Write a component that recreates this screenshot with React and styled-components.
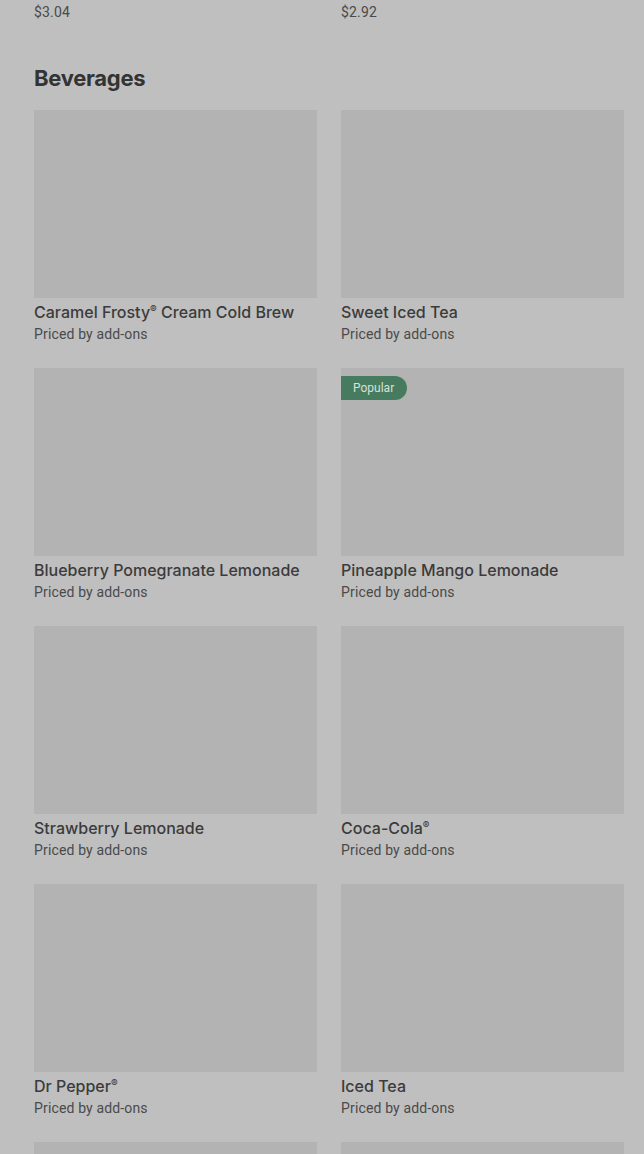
import React from "react";
import styled, { createGlobalStyle } from "styled-components";

const GlobalStyle = createGlobalStyle`
  html, body {
    margin: 0;
    padding: 0;
    background: #bfbfbf;
  }
  body {
    font-family: Roboto, "Liberation Sans", sans-serif;
    -webkit-font-smoothing: antialiased;
  }
`;

const Viewport = styled.div`
  height: 1154px;
  overflow: hidden;
`;

const Page = styled.div`
  margin-top: -24px;
  padding: 0 20px 0 34px;
`;

const Grid = styled.div`
  display: grid;
  grid-template-columns: 1fr 1fr;
  column-gap: 24px;
  row-gap: 24px;
`;

const Card = styled.div`
  display: flex;
  flex-direction: column;
  min-width: 0;
`;

const Thumb = styled.div`
  position: relative;
  height: 188px;
  background: #b3b3b3;
`;

const Badge = styled.span`
  position: absolute;
  top: 8px;
  left: 0;
  height: 24px;
  padding: 0 13px 0 12px;
  display: flex;
  align-items: center;
  font-size: 12px;
  color: #d6e2da;
  background: #477b5f;
  border-radius: 0 12px 12px 0;
`;

const Title = styled.div`
  margin-top: 2px;
  font-family: Inter, Roboto, sans-serif;
  font-size: 16px;
  line-height: 24px;
  font-weight: 500;
  color: #3b3b3b;
  white-space: nowrap;
  overflow: hidden;
  text-overflow: ellipsis;
  sup {
    font-size: 10px;
    vertical-align: 5px;
    line-height: 0;
  }
`;

const Sub = styled.div`
  font-size: 14px;
  line-height: 20px;
  letter-spacing: 0.15px;
  color: #4a4a4a;
`;

const Heading = styled.h2`
  margin: 40px 0 16px;
  font-size: 22px;
  line-height: 32px;
  font-weight: 700;
  color: #333333;
  letter-spacing: -0.3px;
  font-family: Inter, Roboto, sans-serif;
`;

const prev = [
  { name: "Small Homestyle Chicken Sandwich", price: "$3.04" },
  { name: "Small Chili", price: "$2.92" },
];

const drinks = [
  { name: "Caramel Frosty", reg: true, rest: " Cream Cold Brew" },
  { name: "Sweet Iced Tea" },
  { name: "Blueberry Pomegranate Lemonade" },
  { name: "Pineapple Mango Lemonade", popular: true },
  { name: "Strawberry Lemonade" },
  { name: "Coca-Cola", reg: true },
  { name: "Dr Pepper", reg: true },
  { name: "Iced Tea" },
  { name: "Lemonade" },
  { name: "Sprite" },
];

const App = () => {
  return (
    <Viewport>
      <GlobalStyle />
      <Page>
        <Grid>
          {prev.map((p) => (
            <Card key={p.name}>
              <Title>{p.name}</Title>
              <Sub>{p.price}</Sub>
            </Card>
          ))}
        </Grid>
        <Heading>Beverages</Heading>
        <Grid>
          {drinks.map((d) => (
            <Card key={d.name}>
              <Thumb>{d.popular && <Badge>Popular</Badge>}</Thumb>
              <Title>
                {d.name}
                {d.reg && <sup>®</sup>}
                {d.rest}
              </Title>
              <Sub>Priced by add-ons</Sub>
            </Card>
          ))}
        </Grid>
      </Page>
    </Viewport>
  );
};

export default App;
